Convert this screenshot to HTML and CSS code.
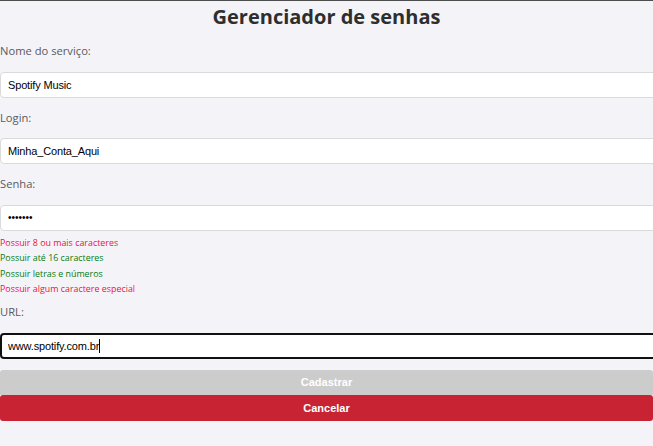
FILE: index.html
```html
<!DOCTYPE html>
<html lang="pt-BR">
<head>
<meta charset="utf-8">
<title>Gerenciador de senhas</title>
<link rel="stylesheet" href="styles.css">
</head>
<body>
<main class="page">
  <h1 class="title">Gerenciador de senhas</h1>
  <form class="form">
    <label class="label" for="servico">Nome do serviço:</label>
    <input class="field" id="servico" type="text" value="Spotify Music">
    <label class="label" for="login">Login:</label>
    <input class="field" id="login" type="text" value="Minha_Conta_Aqui">
    <label class="label" for="senha">Senha:</label>
    <input class="field field-pass" id="senha" type="password" value="1234567">
    <ul class="rules">
      <li class="rule invalid">Possuir 8 ou mais caracteres</li>
      <li class="rule valid">Possuir até 16 caracteres</li>
      <li class="rule valid">Possuir letras e números</li>
      <li class="rule invalid">Possuir algum caractere especial</li>
    </ul>
    <label class="label label-url" for="url">URL:</label>
    <div class="focus-wrap">
      <input class="field field-focus" id="url" type="text" value="www.spotify.com.br">
      <span class="caret"></span>
    </div>
    <div class="actions">
      <button class="btn btn-disabled" type="button">Cadastrar</button>
      <button class="btn btn-cancel" type="button">Cancelar</button>
    </div>
  </form>
</main>
</body>
</html>
```
FILE: styles.css
```css
html, body {
  margin: 0;
  padding: 0;
}
body {
  background: #f4f4f8;
  border-top: 1px solid #4d4d4d;
  overflow: hidden;
  width: 653px;
  height: 445px;
  font-family: "Open Sans", "Noto Sans", sans-serif;
}
.page {
  display: flex;
  flex-direction: column;
}
.title {
  margin: 0;
  text-align: center;
  font-size: 20px;
  line-height: 32px;
  font-weight: 700;
  color: #2e2e2e;
}
.form {
  display: flex;
  flex-direction: column;
  width: 670px;
  padding-top: 8px;
}
.label {
  font-size: 11.2px;
  line-height: 20px;
  color: #5a5a5a;
  margin-bottom: 10.5px;
}
.field {
  box-sizing: border-box;
  height: 26px;
  margin: 0 0 10px 0;
  padding: 0 7px;
  border: 1px solid #dadada;
  border-radius: 4px;
  background: #fff;
  font-family: "Liberation Sans", Arial, sans-serif;
  font-size: 11px;
  letter-spacing: -0.15px;
  color: #000;
  outline: none;
}
.field-pass {
  margin-bottom: 4.5px;
  letter-spacing: 0;
  font-size: 10px;
}
.rules {
  list-style: none;
  margin: 0 0 6px 0;
  padding: 0;
}
.rule {
  font-size: 8.9px;
  line-height: 15.3px;
}
.invalid { color: #f0103a; }
.valid { color: #0a7a0a; }
.focus-wrap {
  position: relative;
  display: flex;
}
.field-focus {
  flex: 1;
  border: 2px solid #111;
  padding: 0 6px;
  margin-bottom: 11px;
}
.caret {
  position: absolute;
  left: 99px;
  top: 6px;
  width: 1px;
  height: 14px;
  background: #000;
}
.actions {
  display: flex;
  flex-direction: column;
}
.btn {
  height: 25.5px;
  border: none;
  border-radius: 3px;
  color: #fff;
  font-family: "Liberation Sans", Arial, sans-serif;
  font-weight: 700;
  font-size: 11px;
  padding: 0;
  width: 653px;
  text-align: center;
}
.btn-disabled {
  background: #cccccc;
  border-radius: 3px 3px 0 0;
}
.btn-cancel {
  background: #c82333;
}
```
